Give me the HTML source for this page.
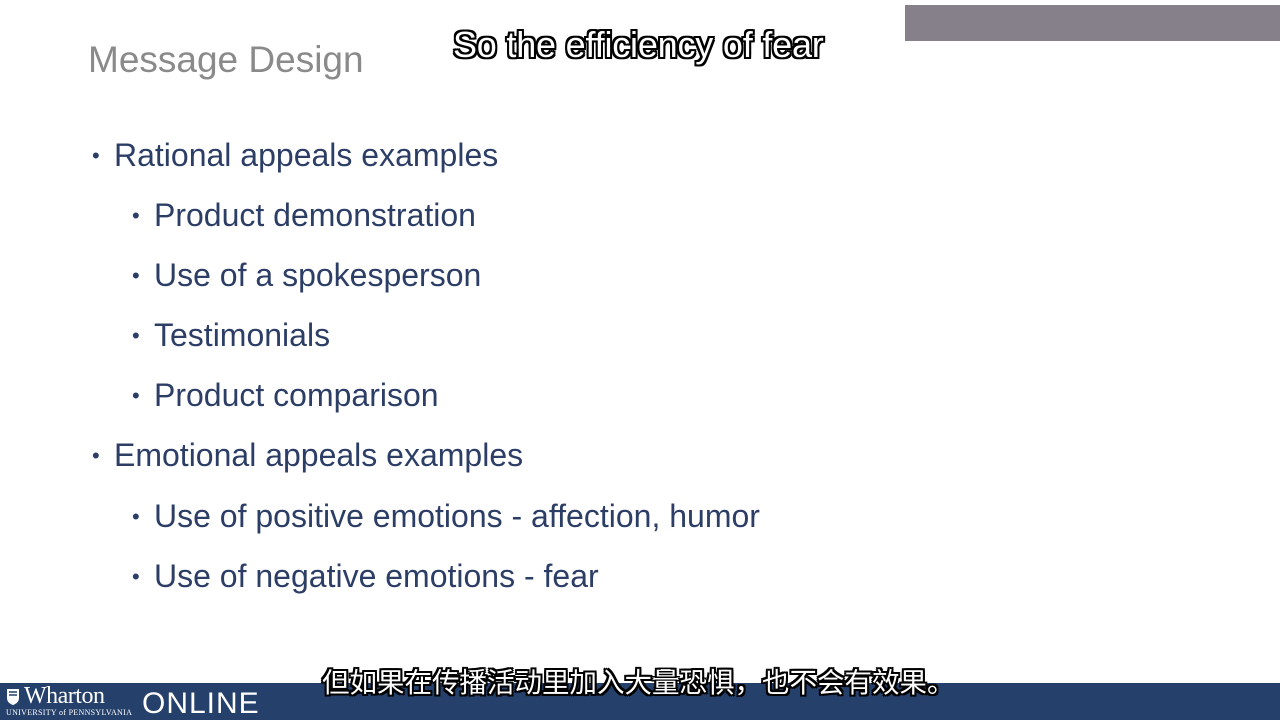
<!DOCTYPE html>
<html><head><meta charset="utf-8"><style>
body{margin:0;width:1280px;height:720px;overflow:hidden;background:#fff;position:relative;font-family:"Liberation Sans","Noto Sans CJK SC",sans-serif}
.t{position:absolute;left:88px;top:39px;font-size:37px;color:#8a8a8a}
.gray{position:absolute;left:905px;top:5px;width:375px;height:36px;background:#86808a}
.sub{position:absolute;color:#fff;font-weight:normal;text-shadow:-2px -2px 0 #000,2px -2px 0 #000,-2px 2px 0 #000,2px 2px 0 #000,0 2px 0 #000,0 -2px 0 #000,2px 0 0 #000,-2px 0 0 #000}
.l{position:absolute;color:#2c3e66;font-size:32px;white-space:nowrap}
.l1{left:114px}.l2{left:154px}
.l:before{content:"•";position:absolute;left:-22px;font-size:22px;top:6px}
.bar{position:absolute;left:0;top:683px;width:1280px;height:37px;background:#25406b}
</style></head><body>
<div class="t">Message Design</div>
<div class="gray"></div>
<div class="sub" style="left:453px;top:24px;font-size:36px;letter-spacing:-0.2px">So the efficiency of fear</div>
<div class="l l1" style="top:137px">Rational appeals examples</div>
<div class="l l2" style="top:197px">Product demonstration</div>
<div class="l l2" style="top:257px">Use of a spokesperson</div>
<div class="l l2" style="top:317px">Testimonials</div>
<div class="l l2" style="top:377px">Product comparison</div>
<div class="l l1" style="top:437px">Emotional appeals examples</div>
<div class="l l2" style="top:498px">Use of positive emotions - affection, humor</div>
<div class="l l2" style="top:558px">Use of negative emotions - fear</div>
<div class="bar"></div>
<svg style="position:absolute;left:6px;top:688px" width="14" height="18"><path d="M1 1h12v9c0 4-3 6-6 7-3-1-6-3-6-7z" fill="#fff"/><path d="M3 4h8M3 7h8" stroke="#25406b" stroke-width="1.5"/></svg>
<div style="position:absolute;left:24px;top:683px;color:#fff;font-family:'Liberation Serif',serif;font-size:24px;letter-spacing:-0.5px">Wharton</div>
<div style="position:absolute;left:6px;top:708px;color:#fff;font-family:'Liberation Serif',serif;font-size:8px;letter-spacing:0.3px">UNIVERSITY of PENNSYLVANIA</div>
<div style="position:absolute;left:142px;top:687px;color:#fff;font-size:30px;letter-spacing:1px">ONLINE</div>
<div class="sub" style="left:322px;top:660px;font-size:27.5px;font-family:'Noto Sans CJK SC',sans-serif">但如果在传播活动里加入大量恐惧，也不会有效果。</div>
</body></html>
